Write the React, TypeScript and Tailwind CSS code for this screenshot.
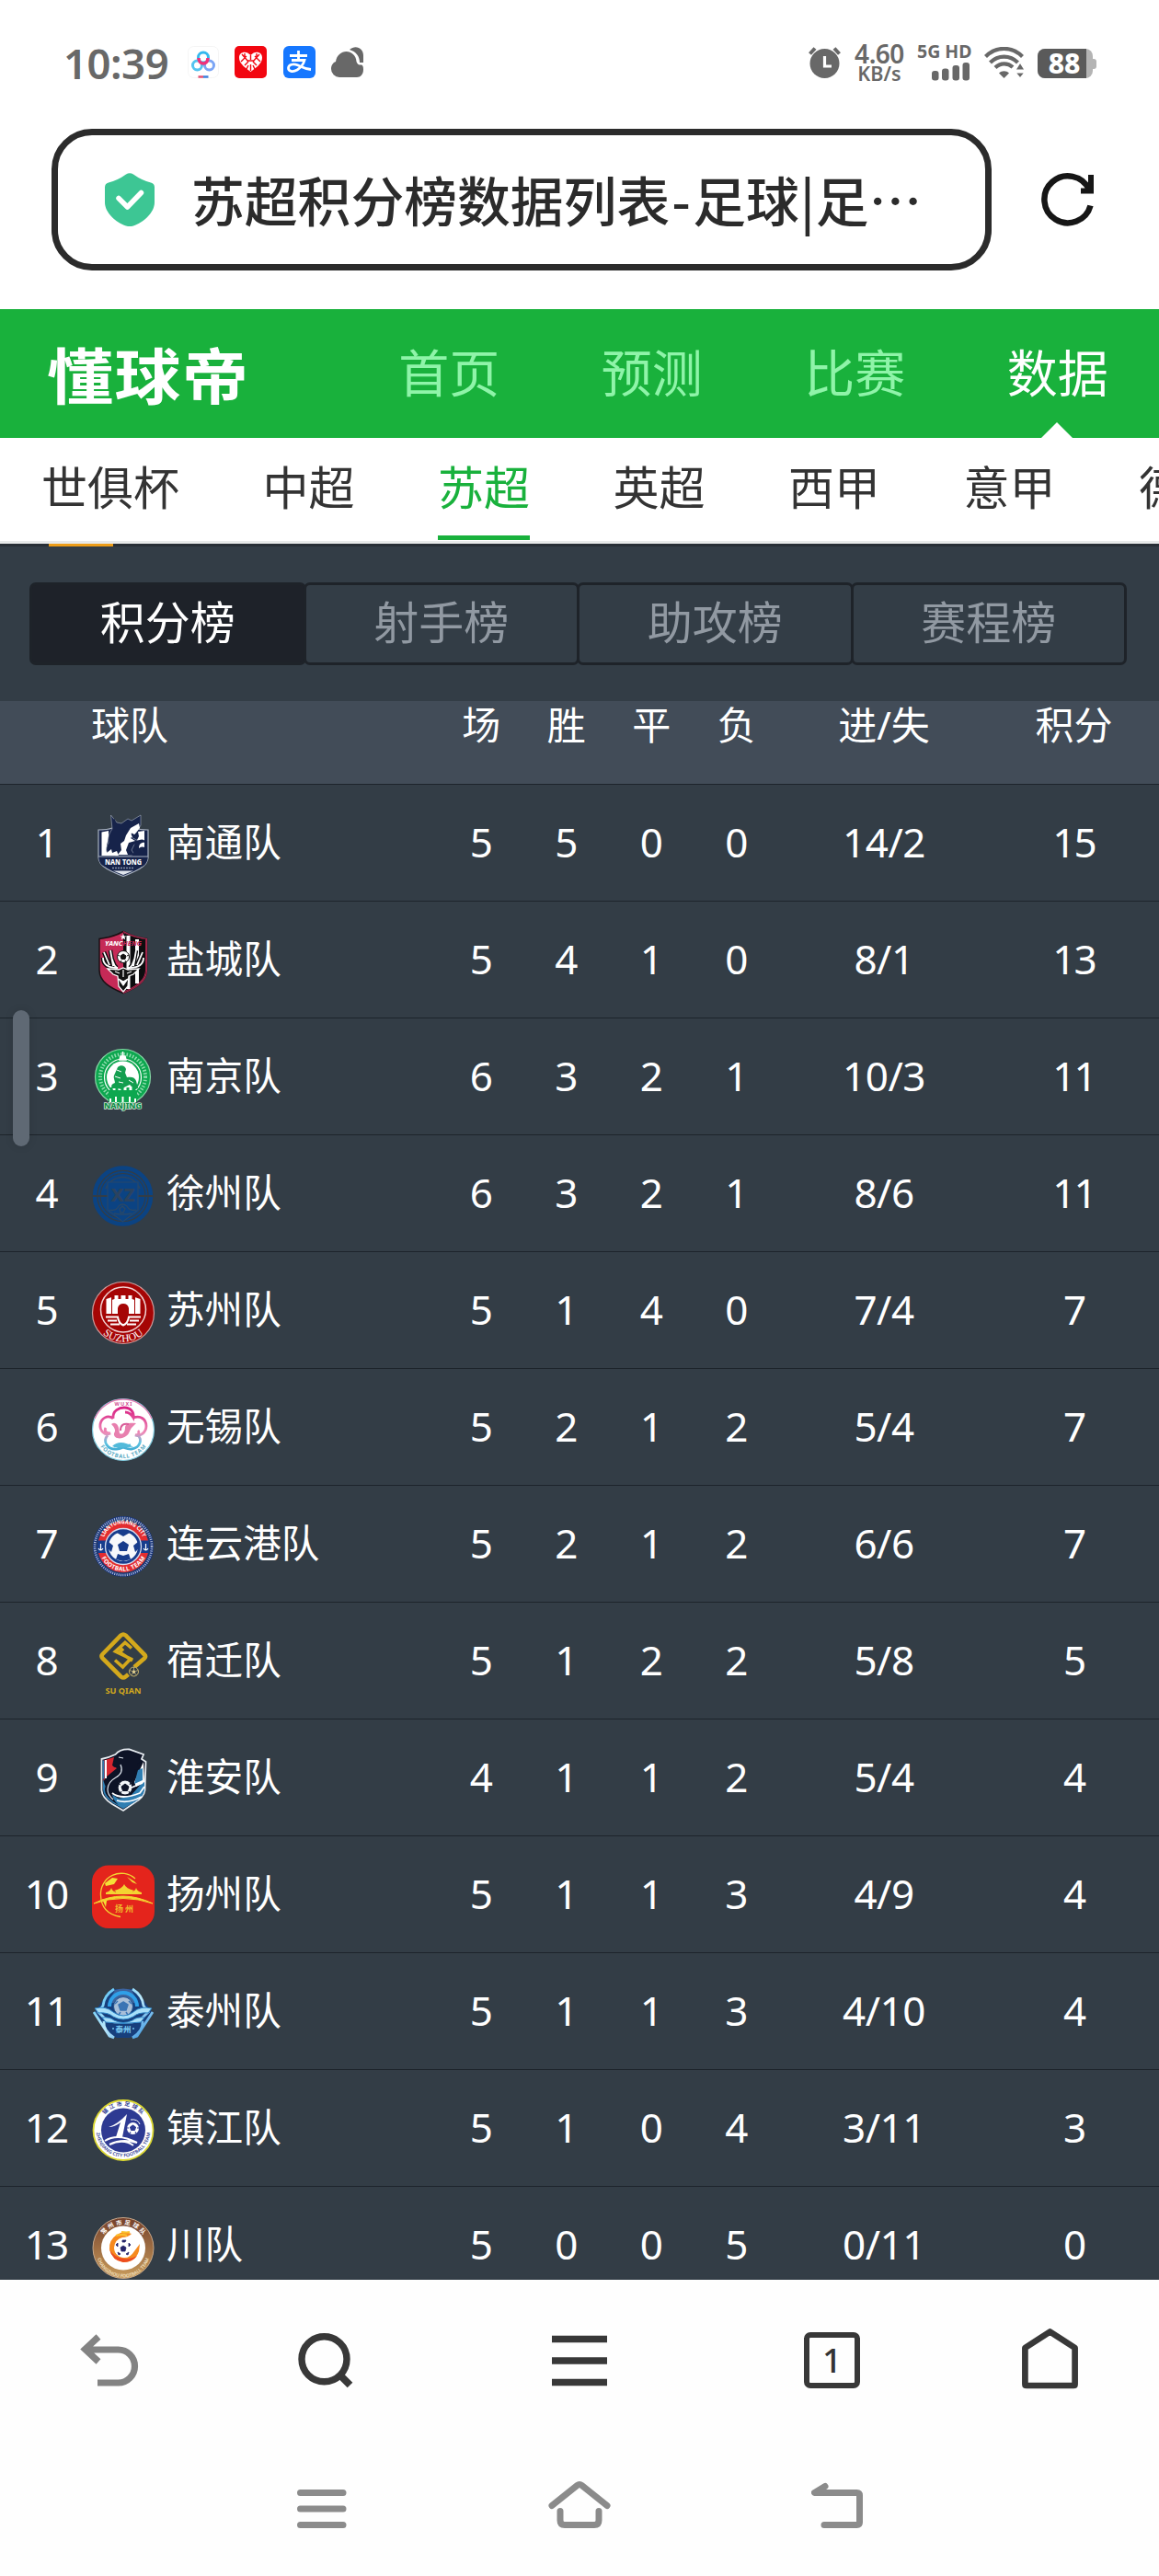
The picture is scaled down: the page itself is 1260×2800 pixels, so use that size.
import React, { useState } from 'react';
import clsx from 'clsx';

const navs = ['首页', '预测', '比赛', '数据'];
const leagues = ['世俱杯', '中超', '苏超', '英超', '西甲', '意甲', '德甲'];
const boards = ['积分榜', '射手榜', '助攻榜', '赛程榜'];

const teams = [
    { name: '南通队', logo: <Nantong />, rec: [5, 5, 0, 0], goal: '14/2', point: 15 },
    { name: '盐城队', logo: <Yancheng />, rec: [5, 4, 1, 0], goal: '8/1', point: 13 },
    { name: '南京队', logo: <Nanjing />, rec: [6, 3, 2, 1], goal: '10/3', point: 11 },
    { name: '徐州队', logo: <Xuzhou />, rec: [6, 3, 2, 1], goal: '8/6', point: 11 },
    { name: '苏州队', logo: <Suzhou />, rec: [5, 1, 4, 0], goal: '7/4', point: 7 },
    { name: '无锡队', logo: <Wuxi />, rec: [5, 2, 1, 2], goal: '5/4', point: 7 },
    { name: '连云港队', logo: <Lianyungang />, rec: [5, 2, 1, 2], goal: '6/6', point: 7 },
    { name: '宿迁队', logo: <Suqian />, rec: [5, 1, 2, 2], goal: '5/8', point: 5 },
    { name: '淮安队', logo: <Huaian />, rec: [4, 1, 1, 2], goal: '5/4', point: 4 },
    { name: '扬州队', logo: <Yangzhou />, rec: [5, 1, 1, 3], goal: '4/9', point: 4 },
    { name: '泰州队', logo: <Taizhou />, rec: [5, 1, 1, 3], goal: '4/10', point: 4 },
    { name: '镇江队', logo: <Zhenjiang />, rec: [5, 1, 0, 4], goal: '3/11', point: 3 },
    { name: '川队', logo: <Changzhou />, rec: [5, 0, 0, 5], goal: '0/11', point: 0 },
];

export default function App() {
    const [board, setBoard] = useState('积分榜');

    return (
        <div className="relative flex flex-col w-[1260px] h-[2800px] overflow-hidden bg-white font-['Noto_Sans','Noto_Sans_CJK_SC',sans-serif]">
            <StatusBar />
            <AddressBar />
            <header className="flex h-[140px] shrink-0 bg-[#19b13c] pl-[51px]">
                <div className="w-[327px] h-[138px] flex items-center">
                    <span className="block origin-center scale-y-[0.92] text-[72px] leading-none font-bold tracking-[1.5px] text-white font-['Noto_Sans_CJK_SC',sans-serif]">懂球帝</span>
                </div>
                {navs.map((v) => (
                    <a
                        key={v}
                        className={clsx('relative w-[220.5px] h-[136px] flex items-center justify-center text-[55px] leading-none', v === '数据' ? 'text-white' : 'text-[#8ff4a9]')}
                    >
                        {v}
                        {v === '数据' && (
                            <svg className="absolute left-[92px] top-[123px]" width="34" height="17" viewBox="0 0 34 17">
                                <path d="M17 0 34 17H0z" fill="#fff" />
                            </svg>
                        )}
                    </a>
                ))}
            </header>
            <nav className="flex h-[115px] shrink-0 gap-[90.5px] overflow-hidden border-b-3 border-[#e8eaea] pl-[45px] text-[50px] leading-none text-[#333]">
                {leagues.map((v) => (
                    <a
                        key={v}
                        className={clsx('flex h-[111px] shrink-0 items-center justify-center whitespace-nowrap border-b-5 pt-[2px]', v === '苏超' ? 'border-[#19b13c] text-[#19b13c]' : 'border-transparent')}
                    >
                        {v}
                    </a>
                ))}
            </nav>
            <main className="h-[1887px] shrink-0 overflow-hidden bg-[#333d46] text-white">
                <div className="h-[3px] bg-[#282f36] pl-[53px]">
                    <div className="h-[3px] w-[70px] bg-[#ed9d18]"></div>
                </div>
                <div className="flex mt-[39px] h-[90px] px-8 mr-[6px]">
                    {boards.map((v) => (
                        <button
                            key={v}
                            type="button"
                            onClick={() => setBoard(v)}
                            className={clsx(
                                'flex-1 -mr-[3px] h-[90px] rounded-[7px] border-3 border-[#1e2329] pb-[3px] text-[49px] leading-none',
                                board === v ? 'bg-[#1e2229] text-white' : 'text-[#9199a2]'
                            )}
                        >
                            {v}
                        </button>
                    ))}
                </div>
                <div className="grid grid-cols-[99px_378px_92.5px_92.5px_92.5px_92.5px_228px_185px] mt-[39px] h-[91px] border-b border-[#1d242b] bg-[#424c58] pt-[5px] text-center text-[42px] leading-[42px]">
                    <span></span>
                    <span className="text-left">球队</span>
                    <span>场</span>
                    <span>胜</span>
                    <span>平</span>
                    <span>负</span>
                    <span>进/失</span>
                    <span>积分</span>
                </div>
                {teams.map((t, i) => (
                    <div
                        key={t.name}
                        className="grid grid-cols-[99px_378px_92.5px_92.5px_92.5px_92.5px_228px_185px] h-[127px] items-center border-b border-[#1d242b] text-center text-[44px] leading-[60px]"
                    >
                        <span className="pb-[2px] pl-px tracking-[-2px]">{i + 1}</span>
                        <span className="flex items-center text-left">
                            <svg className="mt-[5px] w-[70px] h-[68px] shrink-0 overflow-visible" viewBox="-1 0 70 68">
                                {t.logo}
                            </svg>
                            <span className="ml-3 pb-[2px] text-[41.6px]">{t.name}</span>
                        </span>
                        {t.rec.map((n, k) => (
                            <span key={k} className="pb-[2px]">
                                {n}
                            </span>
                        ))}
                        <span className="pb-[2px] tracking-[-0.5px]">{t.goal}</span>
                        <span className="pb-[2px] tracking-[-2px]">{t.point}</span>
                    </div>
                ))}
            </main>
            <BrowserBar />
            <SystemBar />
            {/* side gesture handle, floats over the table */}
            <div className="absolute left-[14px] top-[1098px] h-[148px] w-[18px] rounded-full bg-[#5f6974] shadow-[0_0_10px_rgba(0,0,0,0.12)]"></div>
        </div>
    );
}

function StatusBar() {
    return (
        <div className="flex h-[140px] shrink-0 items-start pt-[48px] pl-[69px] text-[#686868]">
            <div className="w-[135px] pt-px text-[45.5px] leading-[38px] font-semibold tracking-[-0.5px]">10:39</div>
            <svg className="mt-[2px]" width="34" height="35" viewBox="0 0 34 35" fill="none">
                <rect x=".5" y=".5" width="33" height="34" rx="6" stroke="#f5f5f5" />
                <circle cx="17" cy="12.500" r="5.500" stroke="#35b8ee" strokeWidth="3" />
                <circle cx="10.500" cy="21" r="5" stroke="#53c4f0" strokeWidth="3" />
                <circle cx="23.500" cy="21" r="5" stroke="#7ba5f5" strokeWidth="3" />
                <path d="M12 13c0 8 10 8 10 0" stroke="#f0327a" strokeWidth="3.500" />
                <path d="M11.500 33.500H17" stroke="#e45273" strokeWidth="2.500" />
                <path d="M17 33.500h5.500" stroke="#3e80dd" strokeWidth="2.500" />
            </svg>
            <svg className="mt-[2px] ml-[17px]" width="35" height="35" viewBox="0 0 35 35">
                <rect width="35" height="35" rx="5" fill="#f20610" />
                <path d="M17.500 28C9 22 5 18 5 12.500 5 6 13 4.500 17.500 10 22 4.500 30 6 30 12.500 30 18 26 22 17.500 28z" fill="#fff" />
                <path d="M8 9l7 8M27 9l-7 8M7 17l6-6M28 17l-6-6M11 21l4-4M24 21l-4-4M17.500 10v5M17.500 20v7M13 25l2-4M22 25l-2-4M14 16h7M11 8v6M24 8v6" stroke="#f20610" strokeWidth="1.400" />
            </svg>
            <div className="mt-[2px] ml-[18px] flex size-[35px] items-center justify-center rounded-[6px] bg-[#1677ff]">
                <svg width="27" height="25" viewBox="0 0 27 25" fill="none" stroke="#fff" strokeWidth="2.800">
                    <path d="M3 5.500h19M12.500 0v10M5 10.500h14c-1 4-3.500 7.500-8 10.500-5 3-9.500 1.500-9.500-2s5-5.500 10-3.200c5 2.200 8 4.200 14.500 4.700" />
                </svg>
            </div>
            <svg className="mt-[3px] ml-[17px]" width="35" height="33" viewBox="0 0 35 33" fill="#686868">
                <path d="M9 33a9 9 0 0 1-9-9c0-4 2-7 5-8C6 9 11 5 16.500 5S27 9 27.500 16c1 3 2.500 3.500 5 3.500 2 0 2.500 2 2.500 5C35 30 32 33 28 33z" />
                <path d="M20 3c7-6 15-1 15 6v8h-4C31 10 27 5 20 3z" />
            </svg>

            <svg className="mt-[3px] ml-[484px]" width="35" height="34" viewBox="0 0 35 34">
                <ellipse cx="17.500" cy="18" rx="16" ry="16" fill="#686868" />
                <path d="M1.500 7.500 7 1.500M33.500 7.500 28 1.500" stroke="#686868" strokeWidth="4" />
                <path d="M17.500 10v11H25" fill="none" stroke="#fff" strokeWidth="3.200" />
            </svg>
            <div className="ml-[12px] w-[60px] text-center font-semibold">
                <div className="text-[28px] leading-[21px] tracking-[-0.5px]">4.60</div>
                <div className="text-[21.500px] leading-[21px]">KB/s</div>
            </div>
            <div className="ml-[11px] flex w-[60px] flex-col items-end">
                <div className="w-[60px] whitespace-nowrap text-[19.500px] leading-[15px] font-bold">5G HD</div>
                <svg className="mt-[5px] mr-[2px]" width="42" height="20" viewBox="0 0 42 20" fill="#686868">
                    <rect y="9" width="7.500" height="10.500" rx="3" />
                    <rect x="11" y="6.500" width="7.500" height="13" rx="3" />
                    <rect x="22.500" y="3" width="7.500" height="16.500" rx="3" />
                    <rect x="33.500" y="0" width="7.500" height="19.500" rx="3" />
                </svg>
            </div>
            <svg className="mt-[3px] ml-[13px]" width="44" height="35" viewBox="0 0 44 35" fill="none" stroke="#686868" strokeWidth="4.200">
                <path d="M1.500 10.500C13-1 30-1 41.500 10.500M6.500 17C15 8.500 28 8.500 36.500 17M12 22.500c5.500-5.500 13.500-5.500 19-.5" />
                <path d="M21.500 34 16 28.500c3-3 8-3 11 0z" fill="#686868" stroke="none" />
                <path d="M39 17l5 8H34zM39 34l5-6H34z" fill="#686868" stroke="#fff" strokeWidth="1.200" />
            </svg>
            <div className="mt-[5px] ml-[14px] flex items-center">
                <div className="flex h-[32px] w-[60px] items-center rounded-[8px] bg-[#b4b4b4]">
                    <div className="h-[32px] w-[53px] rounded-l-[8px] bg-[#5a5a5a] pl-[5px] text-center text-[30px] leading-[32px] font-extrabold text-white">88</div>
                </div>
                <div className="h-[11px] w-[4px] rounded-r-[3px] bg-[#b4b4b4]"></div>
            </div>
        </div>
    );
}

function AddressBar() {
    return (
        <div className="flex h-[196px] shrink-0 items-start pl-[56px]">
            <div className="flex h-[154px] w-[1022px] items-center rounded-[44px] border-7 border-[#2b2b2b] pl-[51px]">
                <svg width="54" height="58" viewBox="0 0 54 58">
                    <path d="M23 1.500q4-2.500 8 0Q40 8 50 10.500q4 1 4 5V32C54 43 42 54 31 57.500q-4 1-8 0C12 54 0 43 0 32V15.500q0-4 4-5Q14 8 23 1.500z" fill="#3dc694" />
                    <path d="M15 27.500 24.500 37 39.500 21.500" fill="none" stroke="#fff" strokeWidth="5.500" strokeLinecap="round" strokeLinejoin="round" />
                </svg>
                <div className="ml-[40px] flex whitespace-nowrap pb-[3px] text-[57.8px] leading-[80px] font-medium text-[#2b2b2b] font-['Noto_Sans_CJK_SC',sans-serif]">
                    苏超积分榜数据列表<span className="w-[25px] text-center">-</span>足球<span className="flex w-[18px] justify-center">|</span>足…
                </div>
            </div>
            <svg className="mt-[46px] ml-[54px]" width="60" height="62" viewBox="0 0 60 62" fill="none" stroke="#161616" strokeWidth="6.500">
                <path d="M53.500 37.500A25.500 25.500 0 1 1 52 20" />
                <path d="M54 4v17.500H43" strokeWidth="6" strokeLinejoin="miter" />
            </svg>
        </div>
    );
}

function BrowserBar() {
    return (
        <div className="flex h-[177px] shrink-0 items-start bg-[#fefefe] pt-[52px]">
            <svg className="ml-[86px]" width="66" height="68" viewBox="0 0 66 68" fill="none" stroke="#838383" strokeWidth="7.200">
                <path d="M21 10 6.500 23.500 21 37M7 24h35.500a18 18 0 0 1 0 36H20" />
            </svg>
            <svg className="ml-[170px]" width="64" height="68" viewBox="0 0 64 68" fill="none" stroke="#383838" strokeWidth="7.400">
                <circle cx="30.500" cy="34.300" r="24.500" />
                <path d="m46 50 12.500 12.500" strokeWidth="8" />
            </svg>
            <svg className="ml-[214px]" width="60" height="68" viewBox="0 0 60 68" stroke="#383838" strokeWidth="7.400">
                <path d="M0 12.500h60M0 36h60M0 59.500h60" />
            </svg>
            <div className="mt-[5px] ml-[214px] flex size-[61px] items-center justify-center rounded-[7px] border-[6.500px] border-[#383838] pb-[3px] text-[37px] leading-none font-medium text-[#333]">1</div>
            <svg className="ml-[176px]" width="61" height="68" viewBox="0 0 61 68" fill="none" stroke="#383838" strokeWidth="6.700" strokeLinejoin="round">
                <path d="M3.400 22 30.500 4.500 57.600 22v39.500q0 1.500-1.500 1.500H5q-1.600 0-1.600-1.500z" />
            </svg>
        </div>
    );
}

function SystemBar() {
    return (
        <div className="flex h-[145px] shrink-0 items-start bg-[#fefefe] pt-[41px] pl-[323px]">
            <svg width="54" height="56" viewBox="0 0 54 56" stroke="#8b8b8b" strokeWidth="7" strokeLinecap="round">
                <path d="M3.500 13.500h46.500M3.500 31h46.500M3.500 48.500h46.500" />
            </svg>
            <svg className="ml-[219px]" width="68" height="56" viewBox="0 0 68 56" fill="none" stroke="#8b8b8b" strokeWidth="7" strokeLinecap="round" strokeLinejoin="round">
                <path d="M4 27.500 31.500 5.500q2.500-2 5 0L64 27.500M13 33.500v10q0 5 5 5h32q5 0 5-5v-10" />
            </svg>
            <svg className="ml-[218px]" width="57" height="56" viewBox="0 0 57 56" fill="none" stroke="#8b8b8b" strokeWidth="7" strokeLinecap="round" strokeLinejoin="round">
                <path d="M15 6.500 3.500 13.500h46q3 0 3 3v29q0 3-3 3H14" />
            </svg>
        </div>
    );
}

// club badges, all drawn on a 68 x 68 canvas

function Nantong() {
    return (
        <>
            <path d="M7 17q10 0 15-2h24q6 2 15 2v30C61 57 46 63 34 67.500 22 63 7 57 7 47z" fill="#16234a" stroke="#a9b2c0" strokeWidth="1.200" />
            <path d="M10.500 19.500 18 18v8l-2 8 4 5-4 2 3 4h30l-3-5 4-4-2-6 3-6-1-5 7-1v27H10.500z" fill="#fff" />
            <path d="M16 41c-1-3 0-7 2-10-1-5 0-9 4-15L20.500 1 27 9l5 1 7-5 4 2 10-6 0 11-5 8-5 5 5 3 6 1-8 4-3 6 4 6H26z" fill="#16234a" stroke="#a9b2c0" strokeWidth=".6" />
            <path d="M51 10 42 15l-5 8-2 6-4 3 1 7-4 5h11l-2-5 3-8 7-2-5-3 5-5 5-6z" fill="#fff" />
            <path d="m33 17 6-2-3 4zM24 5l3 8M43 21l4 2-3 1z" stroke="#16234a" fill="#16234a" />
            <path d="m16 42 5-4 1 4 5-2 2 5H16z" fill="#fff" />
            <path d="M47 31c6-5 10-4 12 0-6-1-8 2-8 6 3-2 6-2 8 1v8H42c6-3 2-9 5-15z" fill="#16234a" />
            <path d="M7.500 46h53v3q-1 5-6 8H14q-6-3-6.500-8z" fill="#16234a" />
            <path d="M7 46h54" stroke="#a9b2c0" strokeWidth="1" />
            <text x="34" y="55" textAnchor="middle" fontSize="8.500" fontWeight="800" fill="#fff" textLength="40" lengthAdjust="spacingAndGlyphs">NAN TONG</text>
            <path d="M22 58.500h24" stroke="#8390a8" strokeWidth="1.500" strokeDasharray="2 1" />
            <path d="M23 61.500h22l-11 4.500z" fill="#dfe4ec" />
        </>
    );
}

function Yancheng() {
    return (
        <>
            <path d="M34 .5q10 6 25.500 8v34C59.500 55 48 62 34 67.500 20 62 8 55 8 42.500v-34Q24 6.500 34 .5z" fill="#c52a57" stroke="#1b1014" strokeWidth="1.500" />
            <path d="M34 2q10 5 24 7v33c0 12-11 18-24 24z" fill="#0d0d0f" />
            <path d="M39.500 5v58M49 9v48" stroke="#fff" strokeWidth="4" />
            <path d="M34 .5q10 6 25.500 8v34C59.500 55 48 62 34 67.500" fill="none" stroke="#a3284c" strokeWidth="1.200" />
            <text x="14" y="16" fontSize="6.500" fontWeight="800" fontStyle="italic" fill="#fff" textLength="40" lengthAdjust="spacingAndGlyphs">
                YANC<tspan fill="#c52a57">HENG</tspan>
            </text>
            <path d="m34 3 1 2.500h2.500l-2 1.500.8 2.500L34 8l-2.300 1.500.8-2.500-2-1.500H33z" fill="#fff" />
            <path d="M28 40C16 40 12 35 12 29M19 37l-6-14M23 38l-3-17M27 40c-4-3-4-7-5-9M40 40c12 0 16-5 16-11M49 37l6-14M45 38l3-17M41 40c4-3 4-7 5-9" fill="none" stroke="#0d0d0f" strokeWidth="4.500" />
            <path d="M28 40C16 40 12 35 12 29M19 37l-6-14M23 38l-3-17M27 40c-4-3-4-7-5-9M40 40c12 0 16-5 16-11M49 37l6-14M45 38l3-17M41 40c4-3 4-7 5-9" fill="none" stroke="#fff" strokeWidth="1.800" />
            <circle cx="34" cy="28" r="6.500" fill="#fff" stroke="#111" strokeWidth="1" />
            <path d="m34 25 3 2-1 3.500h-4L31 27zM28 26l2 1M40 26l-2 1M31 34l1-2M37 34l-1-2" fill="#111" stroke="#111" />
            <path d="m17 41 12 1 5-2 5 2 12-1-6 6-5 2-1 11-5 6-5-6-1-11-5-2z" fill="#111" stroke="#fff" strokeWidth="1.300" />
            <path d="m25 44 5 2M43 44l-5 2M34 42v8M29 52l5 7 5-7-5 3z" fill="#fff" stroke="#fff" strokeWidth="1.200" />
        </>
    );
}

function Nanjing() {
    return (
        <>
            <circle cx="33.500" cy="31.500" r="30" fill="#0da74f" stroke="#86d5a5" strokeWidth="1.200" />
            <circle cx="33.500" cy="31.500" r="24.500" fill="none" stroke="#8fdcae" strokeWidth="4" strokeDasharray="1.500 1.800" />
            <circle cx="33.500" cy="32" r="20" fill="none" stroke="#fff" strokeWidth="1.200" />
            <circle cx="33.500" cy="32" r="17.500" fill="#fff" />
            <path d="M33.500 4v9M30 13h7l-1-4h-5z" fill="#fff" stroke="#fff" strokeWidth="1.500" />
            <path d="M22 44c-2-3 0-5 3-6 0-3-2-5-1-8l4-9c3-3 8-2 9 2l-1 4 2 5c5-1 9 0 10 4l2 8-4 1-5-5-6 3-3 2-4-1z" fill="#139e4f" />
            <path d="M27 24l5 2M25 31l6 2M29 37l5 1M40 35l5 3" stroke="#fff" strokeWidth="1" />
            <path d="M18 46h31v13H18z" fill="#0da74f" />
            <path d="M21 46v-3M27 46v-3M33 46v-3M39 46v-3M45 46v-3" stroke="#0da74f" strokeWidth="3" />
            <path d="M20 59v-4M26 59v-6M33.500 59v-6M41 59v-6M47 59v-4" stroke="#fff" strokeWidth="2" />
            <text x="33.500" y="66" textAnchor="middle" fontSize="8.500" fontWeight="800" fill="#0d8a44" stroke="#d5efdf" strokeWidth="1.400" paintOrder="stroke" textLength="41" lengthAdjust="spacingAndGlyphs">NANJING</text>
        </>
    );
}

function Xuzhou() {
    return (
        <>
            <circle cx="33.500" cy="34" r="30.500" fill="none" stroke="#0b4383" strokeWidth="4.500" />
            <circle cx="33.500" cy="34" r="24" fill="#0b4383" />
            <circle cx="33.500" cy="34" r="26" fill="none" stroke="#0b4383" strokeWidth="2" />
            <path d="M15 26a20 20 0 0 1 37 0" fill="none" stroke="#2c4561" strokeWidth="1.500" />
            <path d="M1 34h17M49 34h17" stroke="#333d46" strokeWidth="1.800" />
            <path d="M17 19h33v30L33.500 62 17 49z" fill="#0b4383" stroke="#27486c" strokeWidth="1.200" />
            <text x="33.500" y="40" textAnchor="middle" fontSize="20" fontWeight="800" fill="#2b435f" textLength="26" lengthAdjust="spacingAndGlyphs">XZ</text>
            <path d="M19 49q7 2 10-4 4-4 9 0 3 6 10 4M24 53q9 2 19 0M33 45l3 3-2 4h-3l-1-4z" fill="none" stroke="#294869" strokeWidth="1.300" />
        </>
    );
}

function Suzhou() {
    return (
        <>
            <circle cx="34" cy="34" r="33.500" fill="#a50505" stroke="#cf9c9c" strokeWidth="1.200" />
            <circle cx="34" cy="30.500" r="24.500" fill="none" stroke="#f1d3d3" strokeWidth="1.500" />
            <path d="M15.500 35V19l6-2v3l3-1v-4h4v4h3v-4h5v4h3v-4h4v4l3 1v-3l6 2v16H40v-6q-1-5-6-5t-6 5v6z" fill="#fff" />
            <path d="M21.500 17v18M46.500 17v18" stroke="#a50505" strokeWidth="1" />
            <path d="M15 38.500h13q1 7 6 9 5-2 6-9h13M17 42.500h10M41 42.500h10M20 46.500h10M38 46.500h10" fill="none" stroke="#fff" strokeWidth="2" />
            <path id="sz" d="M8 50a31 31 0 0 0 52 0" fill="none" />
            <text fontSize="11.500" fill="#fff" fontFamily="Liberation Serif" textAnchor="middle" dy="1.500">
                <textPath href="#sz" startOffset="50%">SUZHOU</textPath>
            </text>
        </>
    );
}

function Wuxi() {
    return (
        <>
            <defs>
                <linearGradient id="wx" x1="0" y1="8" x2="0" y2="58" gradientUnits="userSpaceOnUse">
                    <stop offset="0" stopColor="#d7197f" />
                    <stop offset=".6" stopColor="#ee8cb8" />
                    <stop offset=".8" stopColor="#5fc4e2" />
                    <stop offset="1" stopColor="#3aa6cf" />
                </linearGradient>
            </defs>
            <circle cx="34" cy="34" r="33.500" fill="#fff" stroke="#7cc9dd" strokeWidth="1.200" />
            <path d="M3 22A33.500 33.500 0 0 1 65 22" fill="none" stroke="#e77bb1" strokeWidth="1.200" />
            <path
                d="M23 22c-1-9 7-12 12-12 7 0 11 5 10 11-3-5-6-6-9-6M45 21c8-3 14 2 14 9s-7 12-12 10c4 0 5-3 3-5M23 22c-6-5-13 0-14 6-1 7 5 13 11 10-5 0-7-3-5-6M17 40c-6 7 0 16 10 15 5 0 9-4 15-4M50 40c5 5 2 14-7 15-6 1-12-5-19-3"
                fill="none"
                stroke="url(#wx)"
                strokeWidth="2.800"
            />
            <path d="M21 28c4-3 7 0 8 4l1 6c4 2 6-2 6-6 0-5 5-6 12-5l-4 4c-3 2-3 8-7 10-5 4-14 3-13-3 2-3 1-6-3-10z" fill="#e87fae" />
            <path d="M31 35c0-6 3-8 9-7" fill="none" stroke="#d95b98" strokeWidth="2" />
            <path d="M22 52c6-6 14-5 23 1-8-1-14 2-23-1z" fill="#52bada" />
            <text x="34" y="8" textAnchor="middle" fontSize="5.500" fontWeight="700" fill="#cf4f93" textLength="19">WUXI</text>
            <path id="wxp" d="M8 49a30 30 0 0 0 52 0" fill="none" />
            <text fontSize="6" fontWeight="700" fill="#5cabc4" dy="1" textAnchor="middle">
                <textPath href="#wxp" startOffset="50%" textLength="56">FOOTBALL TEAM</textPath>
            </text>
        </>
    );
}

function Lianyungang() {
    return (
        <>
            <circle cx="34" cy="34" r="31" fill="none" stroke="#17357c" strokeWidth="4" />
            <circle cx="34" cy="34" r="31" fill="none" stroke="#b4bed6" strokeWidth="2.600" strokeDasharray="1 1.300" />
            <circle cx="34" cy="34" r="28.500" fill="#173c8c" />
            <path d="M7 27.500a27.800 27.800 0 0 1 54 0H47a15 15 0 0 0-26 0zM7 41a27.800 27.800 0 0 0 54 0H47a15 15 0 0 1-26 0z" fill="#e32d30" />
            <circle cx="34" cy="34" r="19.500" fill="#173c8c" stroke="#d8def0" strokeWidth="1.300" />
            <circle cx="34" cy="34" r="16" fill="#f7f8fb" />
            <path d="m34 28 6 4-2 7h-8l-2-7zM27 19l7 4 7-4-3-2h-8zM18 29l5 4-2 7-3-3zM50 29l-5 4 2 7 3-3zM26 48l2-6 6 2 6-2 2 6-8 2z" fill="#173c8c" />
            <path d="M9.500 31v7M7 36q2.500 4 5 0M58.500 31v7M56 36q2.500 4 5 0" fill="none" stroke="#fff" strokeWidth="1.200" />
            <path id="ly1" d="M12 27a22.500 22.500 0 0 1 44 0" fill="none" />
            <path id="ly2" d="M8 41a27 27 0 0 0 52 0" fill="none" />
            <text fontSize="6.500" fontWeight="700" fill="#fff" textAnchor="middle">
                <textPath href="#ly1" startOffset="50%" textLength="54" lengthAdjust="spacingAndGlyphs">LIANYUNGANG CITY</textPath>
            </text>
            <text fontSize="6.500" fontWeight="700" fill="#fff" textAnchor="middle">
                <textPath href="#ly2" startOffset="50%" textLength="58">FOOTBALL TEAM</textPath>
            </text>
        </>
    );
}

function Suqian() {
    return (
        <>
            <path d="M46 38 57 28.500q2-2 0-4L36.500 3.500q-2.500-2-5 0L11.500 24q-2 2 0 4.500L31.500 48.500q2.500 2 5 0l3-2.500" fill="none" stroke="#d4a91c" strokeWidth="4.600" />
            <path d="M43 17.500 36 11.500 25.500 21 42 29 33.500 38 25 30.500M34 18l-4 4 14 9" fill="none" stroke="#d4a91c" strokeWidth="3.600" />
            <circle cx="45.500" cy="43" r="5" fill="#333d46" stroke="#c8b56c" strokeWidth="1" />
            <path d="m45.500 41 2 1.500-.8 2.500h-2.400l-.8-2.500z" fill="#d9c98d" />
            <path d="M45.500 38v3M41 41.500l2.500 1M50 41.500l-2.500 1M42.500 47l1.500-2M48.500 47 47 45" stroke="#c8b56c" strokeWidth=".8" />
            <text x="34" y="66.500" textAnchor="middle" fontSize="9" fontWeight="700" fill="#d4a91c" textLength="39" lengthAdjust="spacingAndGlyphs">SU QIAN</text>
        </>
    );
}

function Huaian() {
    return (
        <>
            <path d="M10.500 11q9-2 15-5 5-6 15-5.500L56 6l-2 5 4.500 3-1 31q-1 8-12 14L34 67 22 60Q11 53 10.500 45z" fill="#0d1326" stroke="#e8edf2" strokeWidth="1.800" />
            <path d="M12.500 12.500 24 9l-2 9 5 3-11 9-3.500 5z" fill="#d6262f" />
            <path d="M15 12v20" stroke="#fff" strokeWidth="2" />
            <path d="M12.500 12.500v20" stroke="#2f77ad" strokeWidth="2" />
            <path d="M12 32q2 14 17 22l13-3 15-17v11q-1 7-11 13L34 65 23 59Q12 52 12 44z" fill="#2f7eb2" />
            <path d="M56 14 46 36l2 5 9-5z" fill="#fff" />
            <path d="M50 23l5-2v13l-9 4z" fill="#2f7eb2" />
            <path d="m23 19 2-9 9-7 12 1 9 3-5 3 4 4-5 2 2 6-5 1 1 8-6 3q-5 4-12 5-7 2-7 9 0 7 7 13Q13 52 14 43q1-8 12-14 7-4 6-10l-7 1z" fill="#0d1326" />
            <path d="m29 9 5 1M31 17q4 9-5 14-9 5-9 13 0 6 6 11" fill="none" stroke="#dfe6ee" strokeWidth="1.200" />
            <circle cx="36" cy="42" r="8" fill="#f3f6f9" stroke="#0d1326" strokeWidth="1.200" />
            <path d="m36 38 4 3-1.500 4.500h-5L32 41zM29 38l2 1M42 37l-1 2M31 48l1-2M41 48l-1-2" fill="#0d1326" stroke="#0d1326" />
            <path d="M22 48q10 8 30 0l5-7M27 56q12 4 27-4M43 42l12-5" fill="none" stroke="#fff" strokeWidth="1.800" />
        </>
    );
}

function Yangzhou() {
    return (
        <>
            <rect x="0" y="-.5" width="68" height="68.500" rx="18" fill="#e4241c" />
            <path d="M47 14A22.500 22.500 0 0 0 9.500 32Q10 52 31 55.500" fill="none" stroke="#f4d431" strokeWidth="1.300" />
            <path d="m14 19 8-6 6 1-4 6-9 2zM38 12l8 5 3 3-5-2zM11 36l5 2-1 7z" fill="#f4e036" />
            <path d="M2 41q31-16 64 0Q34 30 2 41z" fill="#f4d431" stroke="#f4d431" strokeWidth="1" />
            <path d="M26 31v-3l-2-1q9-2 11-7 2 5 11 7l-2 1v3zM15 31v-2q5-1 6-5 1 4 6 5v2zM42 31v-2q5-1 6-5 1 4 6 5v2z" fill="#f4d431" />
            <text x="35" y="49.500" textAnchor="middle" fontSize="9" fontWeight="700" fill="#f0bd2a" textLength="20" fontFamily="Noto Sans CJK SC">扬州</text>
        </>
    );
}

function Taizhou() {
    return (
        <>
            <defs>
                <linearGradient id="tz" x1="0" y1="0" x2="1" y2="1">
                    <stop offset="0" stopColor="#4bbcf2" />
                    <stop offset=".5" stopColor="#bdeafc" />
                    <stop offset="1" stopColor="#2a8bdc" />
                </linearGradient>
            </defs>
            <path d="m18 10 6-3h20l6 3 15 22-15 24-9 4H27l-9-4L3 32z" fill="#173f7c" />
            <path d="M25 8q9-3 18 0L50 22H18z" fill="#3c639d" />
            <path d="M19 26a15 15 0 0 1 30 0" fill="none" stroke="#2fa0e8" strokeWidth="4" />
            <path d="M24 7Q13 14 12 25l-5 7 8 8M44 7q11 7 12 18l5 7-8 8M2 32l17 26 5 2Q12 52 13 42M66 32 49 58l-5 2q12-8 11-18" fill="none" stroke="url(#tz)" strokeWidth="2.800" />
            <circle cx="34" cy="26" r="10.500" fill="#a9bfd8" stroke="#23538f" strokeWidth="1" />
            <path d="m34 21 5 3-2 6h-6l-2-6zM25 23l3-3M43 23l-3-3M29 35l2-3M39 35l-2-3" fill="#3b74b4" stroke="#3b74b4" strokeWidth="1.500" />
            <path d="M3 28q12-3 20 4 11 8 22 0 8-7 20-4l-4 5q-10-1-16 4-11 6-22 0-6-5-16-4zM11 38q8-1 13 3 10 5 20 0 5-4 13-3l-4 5q-19 3-38 0z" fill="#a9e0f9" stroke="#2e86c8" strokeWidth="1" />
            <path d="M15 44q19 4 38 0-5 14-19 15-14-1-19-15z" fill="#173f7c" />
            <text x="34" y="54" textAnchor="middle" fontSize="8.500" fontWeight="800" fill="#75c4ee" fontFamily="Noto Sans CJK SC">泰州</text>
            <circle cx="23" cy="50" r="1" fill="#75c4ee" />
            <circle cx="45" cy="50" r="1" fill="#75c4ee" />
        </>
    );
}

function Zhenjiang() {
    return (
        <>
            <circle cx="34" cy="33.500" r="32.500" fill="#fff" stroke="#dcd832" strokeWidth="1.800" />
            <circle cx="34" cy="33.500" r="24" fill="#2e3a92" />
            <path d="M18 30q10-3 20-14l-5 25h-7l5-16q-6 5-13 5z" fill="#fff" />
            <path d="M14 45q14-9 35 2-17-5-30 2 15-7 26 1" fill="none" stroke="#fff" strokeWidth="2" />
            <circle cx="44.500" cy="31.500" r="6.500" fill="#fff" />
            <path d="m44.500 28 3 2-1 3.500h-4l-1-3.500zM38 31h2M51 31h-2M41 37l1-2M48 37l-1-2" fill="#2e3a92" stroke="#2e3a92" />
            <path d="M42 22q8-1 10 5" fill="none" stroke="#fff" strokeWidth="1" />
            <path id="zj1" d="M10 23a26 26 0 0 1 48 0" fill="none" />
            <path id="zj2" d="M4.500 33a29.500 29.500 0 0 0 59 0" fill="none" />
            <text fontSize="6" fontWeight="700" fill="#2e3a92" textAnchor="middle" fontFamily="Noto Sans CJK SC">
                <textPath href="#zj1" startOffset="50%" textLength="46">镇江市足球队</textPath>
            </text>
            <text fontSize="5" fontWeight="600" fill="#2e3a92" textAnchor="middle">
                <textPath href="#zj2" startOffset="50%" textLength="86" lengthAdjust="spacingAndGlyphs">ZHENJIANG CITY FOOTBALL TEAM</textPath>
            </text>
        </>
    );
}

function Changzhou() {
    return (
        <>
            <defs>
                <linearGradient id="cz" x1="0" y1="0" x2="0" y2="1">
                    <stop offset="0" stopColor="#75402b" />
                    <stop offset="1" stopColor="#c89c5c" />
                </linearGradient>
            </defs>
            <circle cx="34" cy="34.500" r="33" fill="url(#cz)" stroke="#c9a98b" strokeWidth="1" />
            <circle cx="34" cy="34.500" r="24" fill="#fff" />
            <path d="M43 19q-9-4-16 1-9 6-8 16 3 12 15 14 13 0 17-12l1-8-6 8q-5 8-12 7-10-2-10-11 1-9 9-11 6 0 10-4z" fill="#f68a1e" />
            <path d="M19 36q3 12 15 14 10 0 15-7-7 4-14 3-11-1-16-10z" fill="#ec4c20" />
            <path d="M32 17q6 1 9 0M26 21q7-2 12 0" stroke="#fbc22c" strokeWidth="2" fill="none" />
            <circle cx="34" cy="35" r="9.500" fill="#fff" />
            <path d="m34 32 3 2-1 4h-4l-1-4zM33 26h4l-1 2h-3zM26 31l2-2v4zM42 31l-2-2v4zM29 42l-1-3 3 2zM39 42l1-3-3 2z" fill="#24246a" stroke="#24246a" strokeWidth=".8" />
            <path id="cz1" d="M10 25a26 26 0 0 1 48 0" fill="none" />
            <path id="cz2" d="M4.500 37a29.500 29.500 0 0 0 59 0" fill="none" />
            <text fontSize="6.500" fontWeight="700" fill="#fff" textAnchor="middle" fontFamily="Noto Sans CJK SC">
                <textPath href="#cz1" startOffset="50%" textLength="50">常州市足球队</textPath>
            </text>
            <text fontSize="5" fontWeight="600" fill="#f3e2c4" textAnchor="middle">
                <textPath href="#cz2" startOffset="50%" textLength="74" lengthAdjust="spacingAndGlyphs">CHANGZHOU FOOTBALL TEAM</textPath>
            </text>
        </>
    );
}
